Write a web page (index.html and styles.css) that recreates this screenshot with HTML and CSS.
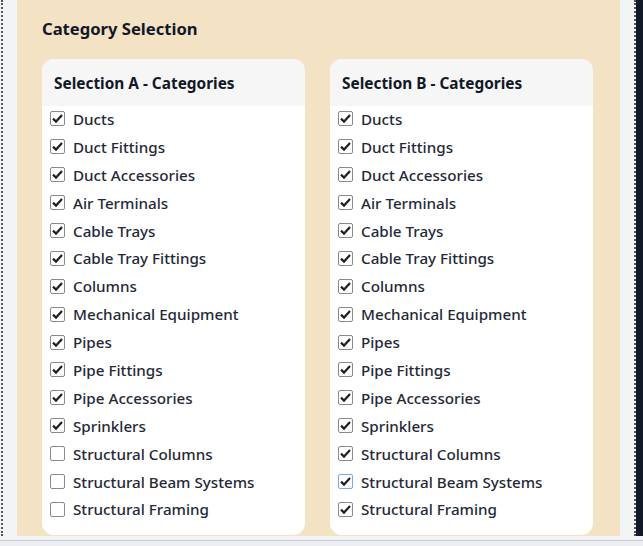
FILE: index.html
```html
<!DOCTYPE html>
<html lang="en">
<head>
    <meta charset="UTF-8">
    <meta name="viewport" content="width=device-width, initial-scale=1.0">
    <title>Category Selection</title>
    <link rel="stylesheet" href="styles.css">
</head>
<body>
    <div class="frame">
        <div class="gutter gutter-left"></div>

        <main class="panel">
            <h2 class="panel-title">Category Selection</h2>

            <div class="cards">
                <section class="card">
                    <h3 class="card-header">Selection A - Categories</h3>
                    <ul class="check-list">
                        <li><label><input type="checkbox" checked> Ducts</label></li>
                        <li><label><input type="checkbox" checked> Duct Fittings</label></li>
                        <li><label><input type="checkbox" checked> Duct Accessories</label></li>
                        <li><label><input type="checkbox" checked> Air Terminals</label></li>
                        <li><label><input type="checkbox" checked> Cable Trays</label></li>
                        <li><label><input type="checkbox" checked> Cable Tray Fittings</label></li>
                        <li><label><input type="checkbox" checked> Columns</label></li>
                        <li><label><input type="checkbox" checked> Mechanical Equipment</label></li>
                        <li><label><input type="checkbox" checked> Pipes</label></li>
                        <li><label><input type="checkbox" checked> Pipe Fittings</label></li>
                        <li><label><input type="checkbox" checked> Pipe Accessories</label></li>
                        <li><label><input type="checkbox" checked> Sprinklers</label></li>
                        <li><label><input type="checkbox"> Structural Columns</label></li>
                        <li><label><input type="checkbox"> Structural Beam Systems</label></li>
                        <li><label><input type="checkbox"> Structural Framing</label></li>
                    </ul>
                </section>

                <section class="card">
                    <h3 class="card-header">Selection B - Categories</h3>
                    <ul class="check-list">
                        <li><label><input type="checkbox" checked> Ducts</label></li>
                        <li><label><input type="checkbox" checked> Duct Fittings</label></li>
                        <li><label><input type="checkbox" checked> Duct Accessories</label></li>
                        <li><label><input type="checkbox" checked> Air Terminals</label></li>
                        <li><label><input type="checkbox" checked> Cable Trays</label></li>
                        <li><label><input type="checkbox" checked> Cable Tray Fittings</label></li>
                        <li><label><input type="checkbox" checked> Columns</label></li>
                        <li><label><input type="checkbox" checked> Mechanical Equipment</label></li>
                        <li><label><input type="checkbox" checked> Pipes</label></li>
                        <li><label><input type="checkbox" checked> Pipe Fittings</label></li>
                        <li><label><input type="checkbox" checked> Pipe Accessories</label></li>
                        <li><label><input type="checkbox" checked> Sprinklers</label></li>
                        <li><label><input type="checkbox" checked> Structural Columns</label></li>
                        <li><label><input type="checkbox" class="is-focused" checked> Structural Beam Systems</label></li>
                        <li><label><input type="checkbox" checked> Structural Framing</label></li>
                    </ul>
                </section>
            </div>
        </main>

        <div class="gutter gutter-right"></div>
        <div class="edge-dark"></div>
    </div>
    <div class="statusbar"></div>
</body>
</html>
```

FILE: styles.css
```css
* {
    box-sizing: border-box;
}

html, body {
    margin: 0;
    height: 100%;
    overflow: hidden;
}

body {
    font-family: 'Noto Sans', 'Open Sans', sans-serif;
    background-color: #f3f4f6;
    color: #1f2937;
}

.frame {
    display: flex;
    height: 536px;
}

.gutter {
    background-color: #f3f4f6;
}

.gutter-left {
    width: 16px;
    border-left: 2px dotted #555;
    margin-left: 1px;
}

.gutter-right {
    width: 16px;
    border-right: 2px dotted #555;
}

.edge-dark {
    width: 7px;
    background-color: #111827;
}

.panel {
    flex: 1;
    background-color: #f3e2c4;
    padding: 18px 26px 0 25px;
    overflow: hidden;
}

.panel-title {
    margin: 0 0 19px;
    font-size: 16.6px;
    font-weight: 700;
    color: #111827;
    line-height: 22px;
}

.cards {
    display: grid;
    grid-template-columns: 263px 263px;
    gap: 25px;
}

.card {
    background-color: #ffffff;
    border-radius: 12px;
    overflow: hidden;
    padding-bottom: 12px;
}

.card-header {
    margin: 0;
    height: 47px;
    padding: 1px 12px 0;
    display: flex;
    align-items: center;
    background-color: #f6f6f6;
    font-size: 15.4px;
    font-weight: 700;
    color: #111827;
}

.check-list {
    list-style: none;
    margin: -1px 0 0;
    padding: 0 8px;
}

.check-list li {
    height: 27.9px;
    display: flex;
    align-items: center;
}

.check-list label {
    display: flex;
    align-items: center;
    gap: 8px;
    font-size: 15.2px;
    font-weight: 500;
    color: #1f2937;
    cursor: pointer;
}

.check-list input {
    appearance: none;
    -webkit-appearance: none;
    margin: 0;
    width: 15px;
    height: 15px;
    border: 1px solid #8a8a8a;
    border-radius: 2px;
    background-color: #ffffff;
    background-repeat: no-repeat;
    background-position: center;
    background-size: 13px 13px;
}

.check-list input:checked {
    background-image: url("data:image/svg+xml;utf8,<svg xmlns='http://www.w3.org/2000/svg' viewBox='0 0 13 13'><path d='M2 6.6 L5 9.6 L11 3' fill='none' stroke='%23222' stroke-width='2.2'/></svg>");
}

.check-list input.is-focused {
    border-color: #7aa7f7;
}

.statusbar {
    height: 10px;
    background-color: #eceef1;
    border-top: 4px solid #f3f4f6;
    box-shadow: inset 0 1px 0 #c9ccd1;
}
```
